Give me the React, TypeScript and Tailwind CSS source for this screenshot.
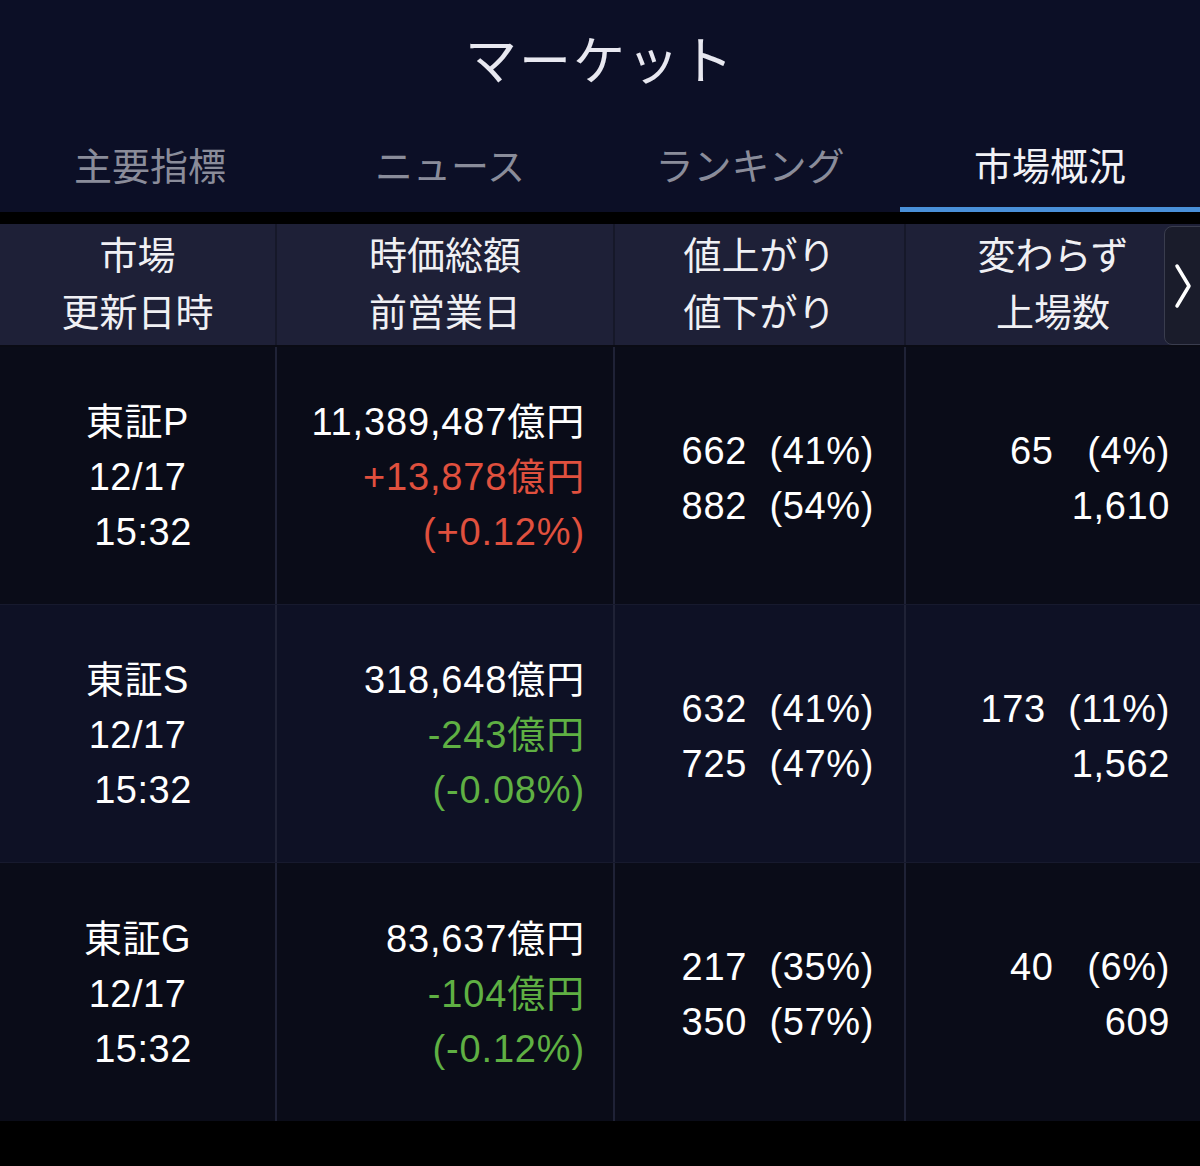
import React from "react";

const FONT = { fontFamily: '"Liberation Sans", "Noto Sans CJK JP", sans-serif' };

type Row = {
  name: string;
  total: string;
  diff: string;
  pct: string;
  up: boolean;
  adv: string;
  dec: string;
  unch: string;
  listed: string;
  bg: string;
};

const rows: Row[] = [
  {
    name: "東証P",
    total: "11,389,487億円",
    diff: "+13,878億円",
    pct: "(+0.12%)",
    up: true,
    adv: "662  (41%)",
    dec: "882  (54%)",
    unch: "65   (4%)",
    listed: "1,610",
    bg: "bg-[#0a0c18]",
  },
  {
    name: "東証S",
    total: "318,648億円",
    diff: "-243億円",
    pct: "(-0.08%)",
    up: false,
    adv: "632  (41%)",
    dec: "725  (47%)",
    unch: "173  (11%)",
    listed: "1,562",
    bg: "bg-[#0e1125]",
  },
  {
    name: "東証G",
    total: "83,637億円",
    diff: "-104億円",
    pct: "(-0.12%)",
    up: false,
    adv: "217  (35%)",
    dec: "350  (57%)",
    unch: "40   (6%)",
    listed: "609",
    bg: "bg-[#0a0c18]",
  },
];

const tabs = ["主要指標", "ニュース", "ランキング", "市場概況"];

export default function App() {
  return (
    <div className="w-[1200px] h-[1166px] bg-black overflow-hidden text-white" style={FONT}>
      {/* Title + tabs */}
      <div className="bg-[#0c0f26]">
        <div className="h-[122px] flex items-center justify-center pt-[2px]">
          <span className="text-[52px] tracking-[2px] text-[#e8e8f0] leading-none">マーケット</span>
        </div>
        <div className="grid grid-cols-4 h-[90px]">
          {tabs.map((t, i) => (
            <div key={t} className="flex flex-col">
              <div
                className={`flex-1 flex items-center justify-center text-[38px] leading-none pt-[4px] ${
                  i === 3 ? "text-[#f2f2f6]" : "text-[#8a8c9a]"
                }`}
              >
                {t}
              </div>
              <div className={`h-[5px] ${i === 3 ? "bg-[#4a90d9]" : "bg-transparent"}`} />
            </div>
          ))}
        </div>
      </div>
      <div className="h-[12px] bg-black" />

      {/* Header */}
      <div className="relative bg-[#1e2037] border-b-2 border-[#0a0b14] grid grid-cols-[277px_338px_291px_1fr] h-[123px]">
        <div className="border-r-2 border-[#161829] flex flex-col items-center justify-center text-[38px] leading-[57px] text-[#f0f0f4]">
          <span>市場</span>
          <span>更新日時</span>
        </div>
        <div className="border-r-2 border-[#161829] flex flex-col items-center justify-center text-[38px] leading-[57px] text-[#f0f0f4]">
          <span>時価総額</span>
          <span>前営業日</span>
        </div>
        <div className="border-r-2 border-[#161829] flex flex-col items-center justify-center text-[38px] leading-[57px] text-[#f0f0f4]">
          <span>値上がり</span>
          <span>値下がり</span>
        </div>
        <div className="flex flex-col items-center justify-center text-[38px] leading-[57px] text-[#f0f0f4]">
          <span>変わらず</span>
          <span>上場数</span>
        </div>
        <div className="absolute right-[-8px] top-[2px] bottom-[0px] w-[44px] bg-[#1a1c2b] border border-[#3a3d4e] rounded-[8px] flex items-center pl-[9px]">
          <svg width="18" height="46" viewBox="0 0 18 46" fill="none">
            <path d="M3 3 L15 23 L3 43" stroke="#ffffff" strokeWidth="3.5" strokeLinecap="round" strokeLinejoin="round" />
          </svg>
        </div>
      </div>

      {/* Rows */}
      {rows.map((r, idx) => (
        <div
          key={r.name}
          className={`grid grid-cols-[277px_338px_291px_1fr] h-[258px] ${r.bg} ${
            idx < rows.length - 1 ? "border-b border-[#171a2e]" : ""
          }`}
        >
          <div className="border-r-2 border-[#1f2236] flex flex-col items-center justify-center text-[38px] leading-[55px] text-white pt-[4px] tracking-[0.5px]">
            <span>{r.name}</span>
            <span>12/17</span>
            <span className="whitespace-pre"> 15:32</span>
          </div>
          <div className="border-r-2 border-[#1f2236] flex flex-col items-end justify-center text-[38px] leading-[55px] pr-[28px] pt-[4px] tracking-[0.85px]">
            <span className="text-white">{r.total}</span>
            <span className={r.up ? "text-[#e0503e]" : "text-[#5fb043]"}>{r.diff}</span>
            <span className={r.up ? "text-[#e0503e]" : "text-[#5fb043]"}>{r.pct}</span>
          </div>
          <div className="border-r-2 border-[#1f2236] flex flex-col items-end justify-center text-[38px] leading-[55px] pr-[30px] text-white whitespace-pre pt-[6px] tracking-[0.65px]">
            <span>{r.adv}</span>
            <span>{r.dec}</span>
          </div>
          <div className="flex flex-col items-end justify-center text-[38px] leading-[55px] pr-[30px] text-white whitespace-pre pt-[6px] tracking-[0.65px]">
            <span>{r.unch}</span>
            <span>{r.listed}</span>
          </div>
        </div>
      ))}
    </div>
  );
}
